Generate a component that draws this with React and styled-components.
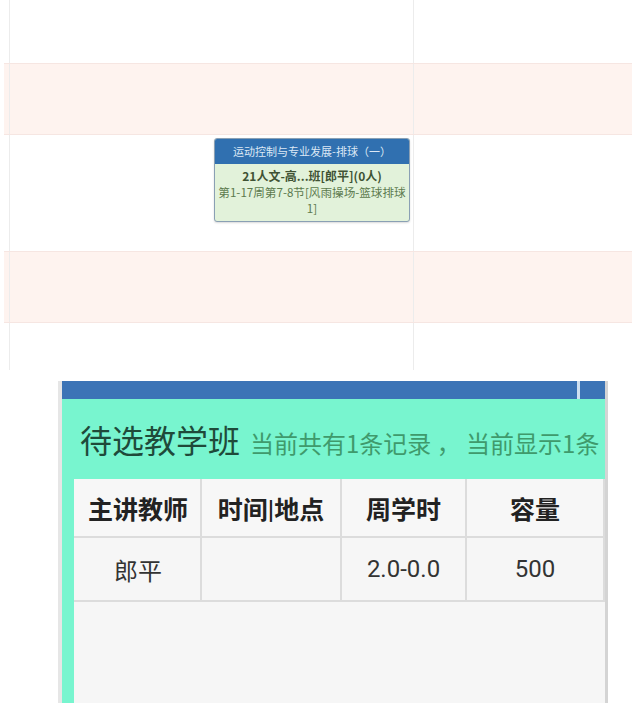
import styled, { createGlobalStyle } from "styled-components";

const GlobalStyle = createGlobalStyle`
    body {
        margin: 0;
        background: #fff;
        font-family: Roboto, "Noto Sans CJK SC", sans-serif;
    }
`

const rows = [
    { h: 63 },
    { h: 72, pink: true },
    { h: 116, card: true },
    { h: 72, pink: true },
    { h: 47 },
]

export default function App() {
    return (
        <Page>
            <GlobalStyle />
            <Timetable>
                {rows.map((r, i) => (
                    <Row key={i} $h={r.h} $pink={r.pink}>
                        <Gutter />
                        <DayCell>
                            {r.card && (
                                <CourseCard>
                                    <CardHead>运动控制与专业发展-排球（一）</CardHead>
                                    <CardBody>
                                        <strong>21人文-高...班[郎平](0人)</strong>
                                        <span>第1-17周第7-8节[风雨操场-篮球排球1]</span>
                                    </CardBody>
                                </CourseCard>
                            )}
                        </DayCell>
                        <Cell />
                    </Row>
                ))}
            </Timetable>

            <Bottom>
                <Panel>
                    <TopBar>
                        <BarPart />
                        <BarPart $small />
                    </TopBar>
                    <PanelBody>
                        <TitleRow>
                            <Title>待选教学班</Title>
                            <Sub>当前共有1条记录 ， 当前显示1条</Sub>
                        </TitleRow>
                        <TableArea>
                            <Table>
                                <colgroup>
                                    <col style={{ width: 126 }} />
                                    <col style={{ width: 140 }} />
                                    <col style={{ width: 125 }} />
                                    <col />
                                </colgroup>
                                <thead>
                                    <tr>
                                        <Th>主讲教师</Th>
                                        <Th>时间|地点</Th>
                                        <Th>周学时</Th>
                                        <Th>容量</Th>
                                    </tr>
                                </thead>
                                <tbody>
                                    <tr>
                                        <Td>郎平</Td>
                                        <Td></Td>
                                        <Td>2.0-0.0</Td>
                                        <Td>500</Td>
                                    </tr>
                                </tbody>
                            </Table>
                        </TableArea>
                    </PanelBody>
                </Panel>
            </Bottom>
        </Page>
    )
}

const Page = styled.div`
    width: 640px;
    height: 727px;
    overflow: hidden;
`

const Timetable = styled.div`
    display: flex;
    flex-direction: column;
    height: 370px;
`

const Row = styled.div`
    display: grid;
    grid-template-columns: 6px 404px 1fr;
    height: ${p => p.$h}px;
    margin: 0 8px 0 4px;
    background: ${p => p.$pink ? "#fef3ef" : "#fff"};
    box-sizing: border-box;
    border-top: ${p => p.$pink ? "1px solid #f6e6e2" : "none"};
    border-bottom: ${p => p.$pink ? "1px solid #f6e6e2" : "none"};
`

const Gutter = styled.div`
    border-right: 1px solid #ececec;
`

const DayCell = styled.div`
    display: flex;
    justify-content: flex-end;
    align-items: flex-start;
    padding: 3px 3px 0 0;
    border-right: 1px solid #ececec;
`

const Cell = styled.div``

const CourseCard = styled.div`
    width: 196px;
    box-sizing: border-box;
    border: 1px solid #8aa0b4;
    border-radius: 3px;
    overflow: hidden;
    background: #e2f2da;
    box-shadow: 0 1px 2px rgba(0,0,0,0.15);
`

const CardHead = styled.div`
    background: #3070b0;
    color: #dce8f5;
    font-size: 11px;
    height: 25px;
    line-height: 25px;
    text-align: center;
    font-family: "Noto Sans CJK SC", sans-serif;
`

const CardBody = styled.div`
    display: flex;
    flex-direction: column;
    align-items: center;
    padding: 3px 3px 5px;
    font-size: 11.6px;
    line-height: 16px;
    color: #5c7a4e;
    text-align: center;
    font-family: "Noto Sans CJK SC", sans-serif;

    strong {
        color: #3f5234;
        font-size: 12px;
        line-height: 17px;
    }
`

const Bottom = styled.div`
    height: 357px;
    padding: 11px 0 0 58px;
    box-sizing: border-box;
`

const Panel = styled.div`
    width: 550px;
    height: 322px;
    display: flex;
    flex-direction: column;
    border-left: 4px solid #e6e6e6;
    border-right: 3px solid #d4d4d4;
    box-sizing: border-box;
`

const TopBar = styled.div`
    display: flex;
    height: 18px;
    background: #cfe0f0;
    gap: 3px;
`

const BarPart = styled.div`
    background: #3c74b6;
    flex: ${p => p.$small ? "0 0 25px" : "1"};
`

const PanelBody = styled.div`
    flex: 1;
    display: flex;
    flex-direction: column;
    background: #78f5cf;
    padding-left: 12px;
`

const TitleRow = styled.div`
    height: 80px;
    display: flex;
    align-items: center;
    gap: 10px;
    padding-left: 6px;
    white-space: pre;
    overflow: hidden;
    font-family: "Noto Sans CJK SC", sans-serif;
`

const Title = styled.span`
    font-size: 32px;
    color: #1f4a3a;
`

const Sub = styled.span`
    font-size: 24px;
    color: #3f9a6c;
    margin-top: 6px;
`

const TableArea = styled.div`
    flex: 1;
    background: #f6f6f6;
`

const Table = styled.table`
    width: 100%;
    border-collapse: collapse;
    table-layout: fixed;
`

const Th = styled.th`
    height: 57px;
    font-size: 25px;
    font-weight: bold;
    color: #222;
    background: #f7f7f7;
    border: 2px solid #dcdcdc;
    border-top: none;
    border-left-color: #f7f7f7;
    padding: 0;
`

const Td = styled.td`
    height: 62px;
    font-size: 24px;
    color: #333;
    text-align: center;
    border: 2px solid #dcdcdc;
    border-left-color: #f6f6f6;
    padding: 0;
`
